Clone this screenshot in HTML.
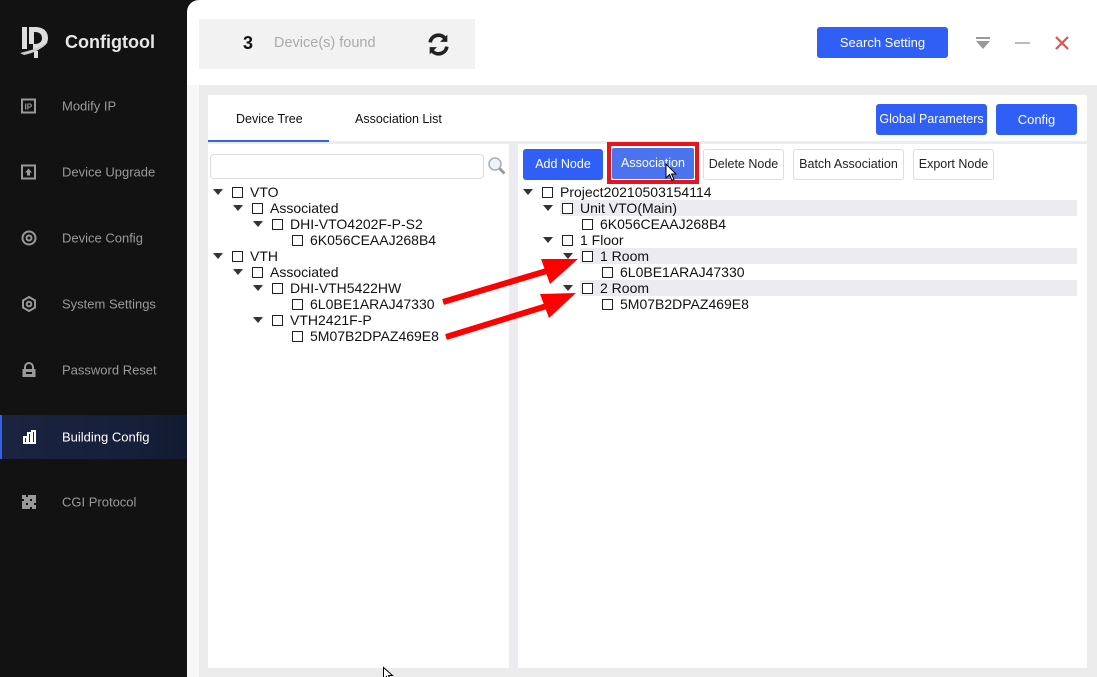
<!DOCTYPE html>
<html><head><meta charset="utf-8">
<style>
*{margin:0;padding:0;box-sizing:border-box}
body{width:1097px;height:677px;overflow:hidden;background:#121212;font-family:"Liberation Sans",Arial,sans-serif;position:relative}
.a{position:absolute}
.nav{position:absolute;left:0;width:187px;height:66px;color:#9a9a9a;font-size:13px}
.nav span{position:absolute;left:62px;top:50%;transform:translateY(-50%)}
.nav svg{position:absolute;left:21px;top:50%;transform:translateY(-50%)}
.t{position:absolute;font-size:14px;color:#111;white-space:nowrap;line-height:16px}
.cb{position:absolute;width:11px;height:11px;border:1px solid #222;background:#fff}
.tri{position:absolute;width:0;height:0;border-left:5px solid transparent;border-right:5px solid transparent;border-top:6px solid #333}
.btn{position:absolute;background:#2f5ff5;color:#fff;font-size:12.5px;text-align:center;border-radius:3px}
.wb{position:absolute;background:#fff;border:1px solid #ddd;border-radius:3px;font-size:12.5px;color:#222;text-align:center;height:31px;line-height:29px}
.hl{position:absolute;background:#ebebf0;height:16px}
</style></head><body>
<svg class="a" style="left:20px;top:26px" width="36" height="33" viewBox="0 0 36 33"><path d="M2 1h5v22H2z M9 1h6c9 0 13 5 13 11s-5 11-13 11h-2V18h2c4 0 7-2 7-6s-3-6-7-6h-1v12H9z" fill="#ddd"/><path d="M0 27c8-2 17-4 28-11-6 7-14 11-24 13z" fill="#ccc"/><rect x="14" y="25" width="4" height="7" fill="#ddd"/></svg>
<div class="a" style="left:65px;top:32px;color:#e6e6e6;font-size:18px;font-weight:bold">Configtool</div>
<div class="nav" style="top:73px"><svg width="15" height="15"><rect x="1" y="1" width="13" height="13" fill="none" stroke="#999" stroke-width="2"/><text x="3.5" y="11" font-size="8" fill="#999" font-weight="bold" font-family="Liberation Sans">IP</text></svg><span>Modify IP</span></div>
<div class="nav" style="top:139px"><svg width="15" height="15"><rect x="1" y="1" width="13" height="13" fill="none" stroke="#999" stroke-width="2"/><path d="M7.5 4l3.5 4H9v3H6V8H4z" fill="#999"/></svg><span>Device Upgrade</span></div>
<div class="nav" style="top:205px"><svg width="16" height="16"><circle cx="8" cy="8" r="6.5" fill="none" stroke="#999" stroke-width="2"/><circle cx="8" cy="8" r="2.5" fill="none" stroke="#999" stroke-width="2"/></svg><span>Device Config</span></div>
<div class="nav" style="top:271px"><svg width="16" height="16"><path d="M8 1l6 3.5v7L8 15l-6-3.5v-7z" fill="none" stroke="#999" stroke-width="2"/><circle cx="8" cy="8" r="2.3" fill="none" stroke="#999" stroke-width="2"/></svg><span>System Settings</span></div>
<div class="nav" style="top:337px"><svg width="16" height="16"><path d="M4 7V5a4 4 0 018 0v2" fill="none" stroke="#999" stroke-width="2"/><rect x="1.5" y="7" width="13" height="8" fill="#999"/><rect x="5" y="10" width="6" height="2" fill="#121212"/></svg><span>Password Reset</span></div>
<div class="nav" style="top:415px;height:44px;background:linear-gradient(90deg,#1a2440,#16203a 70%,#121a30);border-left:2px solid #3b5ee8;color:#fff"><svg width="16" height="16" style="left:19px"><path d="M2 14h13M3 14V8h3v6M7 14V4h3v10M11 14V2h3v12" fill="none" stroke="#fff" stroke-width="2"/></svg><span style="left:60px">Building Config</span></div>
<div class="nav" style="top:469px"><svg width="16" height="16"><rect x="1" y="1" width="14" height="14" fill="#999"/><rect x="5" y="1" width="2" height="2" fill="#121212"/><rect x="9" y="5" width="2" height="2" fill="#121212"/><rect x="5" y="9" width="2" height="2" fill="#121212"/><rect x="1" y="5" width="2" height="2" fill="#121212"/><rect x="13" y="9" width="2" height="2" fill="#121212"/><rect x="9" y="13" width="2" height="2" fill="#121212"/></svg><span>CGI Protocol</span></div>
<div class="a" style="left:187px;top:0;width:910px;height:677px;background:#fff;border-top-left-radius:12px"></div>
<div class="a" style="left:187px;top:85px;width:12px;height:592px;background:#f7f7f8"></div>
<div class="a" style="left:199px;top:85px;width:898px;height:592px;background:#ebebeb"></div>
<div class="a" style="left:199px;top:19px;width:276px;height:50px;background:#f2f2f2"></div>
<div class="a" style="left:243px;top:33px;font-size:18px;font-weight:bold;color:#111">3</div>
<div class="a" style="left:274px;top:35px;font-size:14.5px;color:#aaa">Device(s) found</div>
<svg class="a" style="left:426px;top:32px" width="25" height="25" viewBox="0 0 24 24"><path d="M4 10a8 8 0 0 1 14.5-3.5" fill="none" stroke="#222" stroke-width="3.5"/><path d="M20.5 2.5v7h-7z" fill="#222"/><path d="M20 14a8 8 0 0 1-14.5 3.5" fill="none" stroke="#222" stroke-width="3.5"/><path d="M3.5 21.5v-7h7z" fill="#222"/></svg>
<div class="btn" style="left:817px;top:27px;width:131px;height:31px;line-height:31px;font-size:13px">Search Setting</div>
<svg class="a" style="left:976px;top:37px" width="14" height="13"><rect x="0" y="0" width="14" height="2" fill="#999"/><path d="M0 4h14l-7 8z" fill="#999"/></svg>
<div class="a" style="left:1015px;top:42px;width:15px;height:2px;background:#bbb"></div>
<svg class="a" style="left:1055px;top:36px" width="14" height="14"><path d="M1 1l12 12M13 1L1 13" stroke="#d9534f" stroke-width="2.2"/></svg>
<div class="a" style="left:208px;top:95px;width:879px;height:47px;background:#fff"></div>
<div class="a" style="left:208px;top:141px;width:879px;height:3px;background:#ebebf0"></div>
<div class="a" style="left:208px;top:140px;width:121px;height:2px;background:#3366dd"></div>
<div class="a" style="left:236px;top:112px;font-size:12.5px;color:#111">Device Tree</div>
<div class="a" style="left:355px;top:112px;font-size:12.5px;color:#111">Association List</div>
<div class="btn" style="left:876px;top:104px;width:111px;height:31px;line-height:31px">Global Parameters</div>
<div class="btn" style="left:996px;top:104px;width:81px;height:31px;line-height:31px;font-size:13px">Config</div>
<div class="a" style="left:208px;top:144px;width:301px;height:524px;background:#fff"></div>
<div class="a" style="left:509px;top:144px;width:9px;height:524px;background:#ebebf0"></div>
<div class="a" style="left:518px;top:144px;width:569px;height:524px;background:#fff"></div>
<div class="a" style="left:210px;top:154px;width:274px;height:25px;border:1px solid #ddd;border-radius:4px"></div>
<svg class="a" style="left:487px;top:156px" width="20" height="20"><circle cx="8" cy="8" r="6" fill="#eef3f7" stroke="#aab" stroke-width="1.5"/><path d="M12.5 12.5l5 5" stroke="#999" stroke-width="3"/></svg>
<div class="tri" style="left:213px;top:189px"></div><div class="cb" style="left:232px;top:187px"></div><div class="t" style="left:250px;top:184px">VTO</div>
<div class="tri" style="left:233px;top:205px"></div><div class="cb" style="left:252px;top:203px"></div><div class="t" style="left:270px;top:200px">Associated</div>
<div class="tri" style="left:253px;top:221px"></div><div class="cb" style="left:272px;top:219px"></div><div class="t" style="left:290px;top:216px">DHI-VTO4202F-P-S2</div>
<div class="cb" style="left:292px;top:235px"></div><div class="t" style="left:310px;top:232px">6K056CEAAJ268B4</div>
<div class="tri" style="left:213px;top:253px"></div><div class="cb" style="left:232px;top:251px"></div><div class="t" style="left:250px;top:248px">VTH</div>
<div class="tri" style="left:233px;top:269px"></div><div class="cb" style="left:252px;top:267px"></div><div class="t" style="left:270px;top:264px">Associated</div>
<div class="tri" style="left:253px;top:285px"></div><div class="cb" style="left:272px;top:283px"></div><div class="t" style="left:290px;top:280px">DHI-VTH5422HW</div>
<div class="cb" style="left:292px;top:299px"></div><div class="t" style="left:310px;top:296px">6L0BE1ARAJ47330</div>
<div class="tri" style="left:253px;top:317px"></div><div class="cb" style="left:272px;top:315px"></div><div class="t" style="left:290px;top:312px">VTH2421F-P</div>
<div class="cb" style="left:292px;top:331px"></div><div class="t" style="left:310px;top:328px">5M07B2DPAZ469E8</div>
<div class="btn" style="left:523px;top:149px;width:80px;height:31px;line-height:31px">Add Node</div>
<div class="a" style="left:607px;top:142px;width:92px;height:42px;border:4px solid #e8141c;background:#fff"></div>
<div class="btn" style="left:612px;top:148px;width:82px;height:31px;line-height:31px;background:#4b73f0;border-radius:2px">Association</div>
<svg class="a" style="left:665px;top:163px" width="13" height="19"><path d="M1 1v14l3.5-3.5 2.5 6 2-1-2.5-5.5H11z" fill="#fff" stroke="#000" stroke-width="1"/></svg>
<div class="wb" style="left:703px;top:149px;width:81px">Delete Node</div>
<div class="wb" style="left:793px;top:149px;width:111px">Batch Association</div>
<div class="wb" style="left:913px;top:149px;width:81px">Export Node</div>
<div class="hl" style="left:560px;top:200px;width:517px"></div>
<div class="hl" style="left:580px;top:248px;width:497px"></div>
<div class="hl" style="left:580px;top:280px;width:497px"></div>
<div class="tri" style="left:523px;top:189px"></div><div class="cb" style="left:542px;top:187px"></div><div class="t" style="left:560px;top:184px">Project20210503154114</div>
<div class="tri" style="left:543px;top:205px"></div><div class="cb" style="left:562px;top:203px"></div><div class="t" style="left:580px;top:200px">Unit VTO(Main)</div>
<div class="cb" style="left:582px;top:219px"></div><div class="t" style="left:600px;top:216px">6K056CEAAJ268B4</div>
<div class="tri" style="left:543px;top:237px"></div><div class="cb" style="left:562px;top:235px"></div><div class="t" style="left:580px;top:232px">1 Floor</div>
<div class="tri" style="left:563px;top:253px"></div><div class="cb" style="left:582px;top:251px"></div><div class="t" style="left:600px;top:248px">1 Room</div>
<div class="cb" style="left:602px;top:267px"></div><div class="t" style="left:620px;top:264px">6L0BE1ARAJ47330</div>
<div class="tri" style="left:563px;top:285px"></div><div class="cb" style="left:582px;top:283px"></div><div class="t" style="left:600px;top:280px">2 Room</div>
<div class="cb" style="left:602px;top:299px"></div><div class="t" style="left:620px;top:296px">5M07B2DPAZ469E8</div>
<svg class="a" style="left:0;top:0" width="1097" height="677"><path d="M443 302L550 270" stroke="#f00" stroke-width="6"/><path d="M578 259L541 259L550 284z" fill="#f00"/><path d="M446 337L550 305" stroke="#f00" stroke-width="6"/><path d="M576 293L540 294L549 318z" fill="#f00"/>
<path d="M383.5 667.5v12l3-3 2 4 2-1-2-4h4z" fill="#fff" stroke="#000" stroke-width="1"/></svg>
</body></html>
